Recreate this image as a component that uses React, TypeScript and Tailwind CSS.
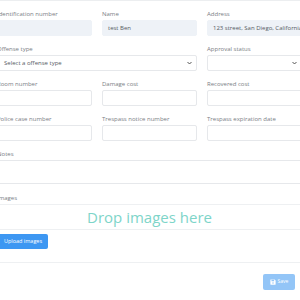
import React from "react";

const font = { fontFamily: '"Open Sans", "Noto Sans", sans-serif' };

const Label: React.FC<{ text: string }> = ({ text }) => (
  <label className="block text-[6px] leading-[8px] text-[#7a7e85] mb-[2px] whitespace-nowrap">{text}</label>
);

const Field: React.FC<{ label: string; value?: string; disabled?: boolean; className?: string }> = ({
  label,
  value,
  disabled,
  className,
}) => (
  <div className={className}>
    <Label text={label} />
    <div
      className={`h-[16px] rounded-[2px] border flex items-center px-[5px] text-[6px] text-[#555b63] whitespace-nowrap overflow-hidden ${
        disabled ? "bg-[#eef2f7] border-[#eef2f7]" : "bg-white border-[#e6e8eb]"
      }`}
    >
      {value}
    </div>
  </div>
);

const Chevron = () => (
  <svg width="5" height="4" viewBox="0 0 10 6" className="shrink-0">
    <path d="M1 1l4 4 4-4" fill="none" stroke="#444" strokeWidth="1.8" />
  </svg>
);

const Select: React.FC<{ label: string; placeholder?: string; className?: string }> = ({
  label,
  placeholder,
  className,
}) => (
  <div className={className}>
    <Label text={label} />
    <div className="h-[16px] rounded-[2px] border border-[#e6e8eb] bg-white flex items-center justify-between pl-[6px] pr-[4px] text-[6px] text-[#555b63]">
      <span>{placeholder}</span>
      <Chevron />
    </div>
  </div>
);

export default function App() {
  return (
    <div className="w-[300px] h-[300px] overflow-hidden bg-white relative" style={font}>
      <div className="ml-[-3px] w-[305px] border-t border-[#eceef0] pt-[9px]">
        <div className="grid grid-cols-3 gap-x-[10px] gap-y-[9px]">
          <Field label="Identification number" disabled />
          <Field label="Name" value="test Ben" disabled />
          <Field label="Address" value="123 street, San Diego, California, l" disabled />

          <Select label="Offense type" placeholder="Select a offense type" className="col-span-2" />
          <Select label="Approval status" />

          <Field label="Room number" />
          <Field label="Damage cost" />
          <Field label="Recovered cost" />

          <Field label="Police case number" />
          <Field label="Trespass notice number" />
          <Field label="Trespass expiration date" />

          <div className="col-span-3">
            <Label text="Notes" />
            <div className="h-[24px] rounded-[2px] border border-[#e6e8eb] bg-white" />
          </div>

          <div className="col-span-3 mt-[1px]">
            <Label text="Images" />
            <div className="border-y border-[#eef0f2] h-[26px] flex items-center justify-center">
              <span className="text-[15px] leading-none text-[#7ed5c9]">Drop images here</span>
            </div>
          </div>
        </div>

        <div className="mt-[4px] pb-[13px] border-b border-[#eef0f2]">
          <button className="h-[15px] w-[50px] ml-[1px] rounded-[2px] bg-[#3d97f2] text-white text-[5.5px] flex items-center justify-center">
            Upload images
          </button>
        </div>

        <div className="flex justify-end pt-[11px] pr-[7px]">
          <button className="h-[16px] w-[32px] rounded-[2px] bg-[#93c5f7] text-white text-[5px] flex items-center justify-center gap-[2px]">
            <svg width="6" height="6" viewBox="0 0 16 16">
              <path d="M2 1h10l3 3v10a1 1 0 0 1-1 1H2a1 1 0 0 1-1-1V2a1 1 0 0 1 1-1z" fill="white" />
              <rect x="4" y="2" width="7" height="4" fill="#93c5f7" />
              <circle cx="8" cy="10.5" r="2" fill="#93c5f7" />
            </svg>
            Save
          </button>
        </div>
      </div>
    </div>
  );
}
